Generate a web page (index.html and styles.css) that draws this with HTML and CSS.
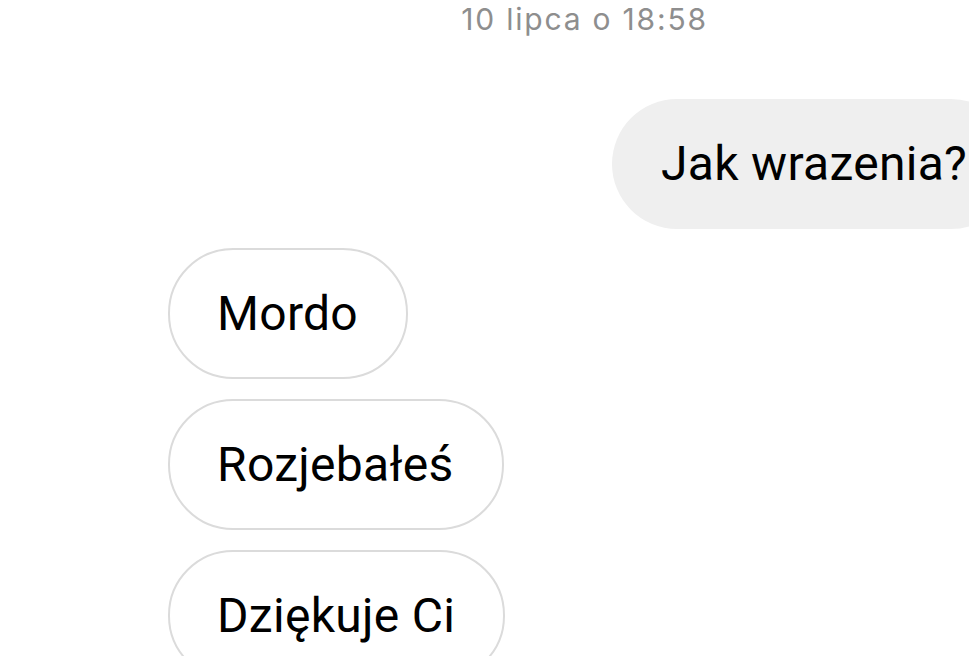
FILE: index.html
```html
<!DOCTYPE html>
<html lang="pl">
<head>
    <meta charset="UTF-8">
    <meta name="viewport" content="width=device-width, initial-scale=1.0">
    <title>Wiadomości</title>
    <link rel="stylesheet" href="styles.css">
</head>
<body>
    <div class="thread">
        <p class="timestamp">10 lipca o 18:58</p>

        <div class="row outgoing">
            <div class="bubble sent">Jak wrazenia?</div>
        </div>

        <div class="row incoming">
            <div class="bubble received">Mordo</div>
            <div class="bubble received">Rozjebałeś</div>
            <div class="bubble received">Dziękuje Ci</div>
        </div>
    </div>
</body>
</html>
```

FILE: styles.css
```css
body {
    margin: 0;
    background: #ffffff;
    font-family: Roboto, Inter, "Noto Sans", sans-serif;
    color: #000000;
    overflow: hidden;
}

.thread {
    width: 1169px;
    display: flex;
    flex-direction: column;
    gap: 19px;
}

.timestamp {
    margin: 0 0 42px;
    text-align: center;
    font-family: Inter, Roboto, sans-serif;
    font-size: 30px;
    letter-spacing: 1.8px;
    line-height: 38px;
    color: #8e8e8e;
}

.row {
    display: flex;
}

.outgoing {
    padding-left: 612px;
}

.incoming {
    flex-direction: column;
    align-items: flex-start;
    gap: 20px;
    padding-left: 168px;
}

.bubble {
    font-size: 48px;
    line-height: 58px;
    letter-spacing: 0.3px;
    border-radius: 65px;
    white-space: nowrap;
}

.sent {
    background: #efefef;
    padding: 36px 49px;
}

.received {
    background: #ffffff;
    border: 2px solid #dbdbdb;
    padding: 35px 48px 34px 47px;
}
```
